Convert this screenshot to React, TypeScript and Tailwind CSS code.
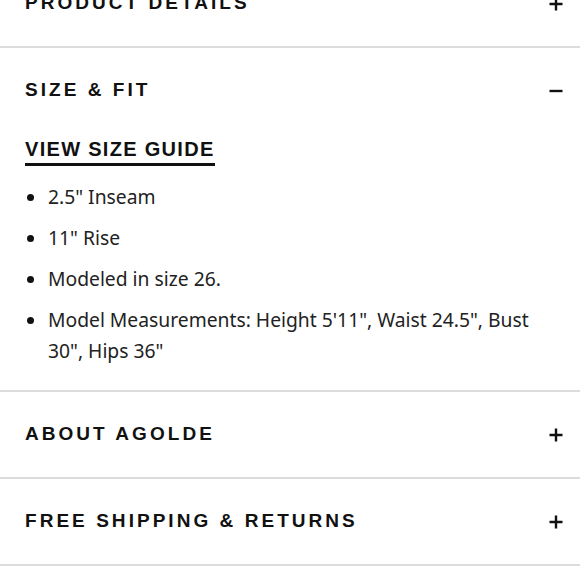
import React, { useState } from 'react';

const headingFont = { fontFamily: '"Liberation Sans", Arial, sans-serif' };
const bodyFont = { fontFamily: '"Noto Sans", Inter, sans-serif' };

function PlusIcon() {
  return (
    <svg width="14" height="14" viewBox="0 0 14 14" className="shrink-0">
      <path d="M7 0.5v13M0.5 7h13" stroke="#111" strokeWidth="2.4" />
    </svg>
  );
}

function MinusIcon() {
  return (
    <svg width="14" height="14" viewBox="0 0 14 14" className="shrink-0">
      <path d="M0.5 7h13" stroke="#111" strokeWidth="2.4" />
    </svg>
  );
}

const sizeFit = [
  '2.5" Inseam',
  '11" Rise',
  'Modeled in size 26.',
  'Model Measurements: Height 5\'11", Waist 24.5", Bust 30", Hips 36"',
];

const sections = ['PRODUCT DETAILS', 'SIZE & FIT', 'ABOUT AGOLDE', 'FREE SHIPPING & RETURNS'];

export default function App() {
  const [open, setOpen] = useState('SIZE & FIT');

  return (
    <div className="w-[580px] h-[580px] overflow-hidden bg-white">
      <div className="-mt-[39px]">
        {sections.map((title) => {
          const isOpen = open === title;
          return (
            <div key={title} className="border-b-2 border-[#dcdcdc]">
              <button
                onClick={() => setOpen(isOpen ? '' : title)}
                className="w-full h-[85px] flex items-center justify-between pl-[25px] pr-[17px] text-left"
              >
                <span
                  className="text-[19px] font-bold tracking-[0.16em] text-[#111]"
                  style={headingFont}
                >
                  {title}
                </span>
                {isOpen ? <MinusIcon /> : <PlusIcon />}
              </button>
              {isOpen && title === 'SIZE & FIT' && (
                <div className="pl-[25px] pr-[30px] pb-[24px]">
                  <a
                    href="#"
                    className="inline-block mt-[5px] text-[20px] font-bold tracking-[0.065em] text-[#111] border-b-[3px] border-[#111] leading-[22px] pb-[3px]"
                    style={headingFont}
                  >
                    VIEW SIZE GUIDE
                  </a>
                  <ul className="mt-[15px] flex flex-col gap-[10px] text-[19.3px] leading-[31px] text-[#222]" style={bodyFont}>
                    {sizeFit.map((item) => (
                      <li key={item} className="flex">
                        <span className="w-[23px] shrink-0 flex pt-[13px]">
                          <span className="w-[7px] h-[7px] rounded-full bg-[#111] ml-[2px]" />
                        </span>
                        <span>{item}</span>
                      </li>
                    ))}
                  </ul>
                </div>
              )}
            </div>
          );
        })}
      </div>
    </div>
  );
}
